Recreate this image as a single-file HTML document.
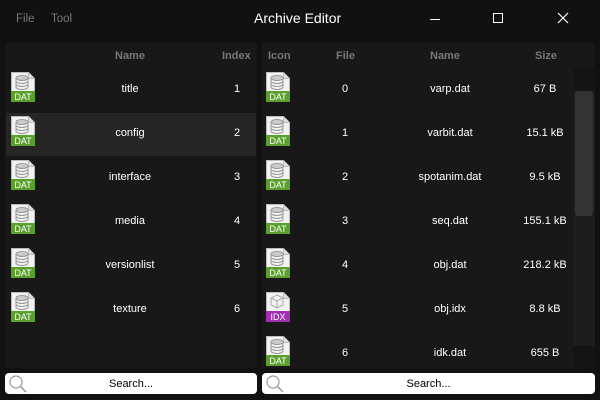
<!DOCTYPE html>
<html><head><style>
*{margin:0;padding:0;box-sizing:border-box}
body{width:600px;height:400px;background:#111;font-family:"Liberation Sans",sans-serif;color:#fff;position:relative;overflow:hidden;font-size:11px}
.a{position:absolute}
.menu{color:#777;font-size:11.5px;top:13px}
.panel{background:#181818}
.hdr{color:#777;font-weight:bold;font-size:11px;top:50px}
.c{position:absolute;text-align:center}
.search{background:#fff;border-radius:4px;height:21px;top:373px;color:#000;font-size:11px;text-align:center;line-height:22px}
</style></head><body>
<div class="a menu" style="left:16px">File</div>
<div class="a menu" style="left:51px">Tool</div>
<div class="a" style="left:254px;top:10px;font-size:14px;color:#fff">Archive Editor</div>
<div class="a" style="left:430px;top:19px;width:10px;height:1px;background:#fff"></div>
<div class="a" style="left:493px;top:13px;width:10px;height:10px;border:1px solid #fff"></div>
<svg class="a" style="left:557px;top:12px" width="12" height="12"><path d="M1 1L11 11M11 1L1 11" stroke="#fff" stroke-width="1.2"/></svg>

<svg width="0" height="0" style="position:absolute"><defs>
<g id="dat"><path d="M0.5 0.5H17.5L23.5 6.5V29.5H0.5Z" fill="#f2f2f2" stroke="#bbb"/><path d="M17.5 0.5V6.5H23.5" fill="#ddd" stroke="#bbb"/>
<ellipse cx="11" cy="6" rx="6" ry="2.5" fill="#ccc" stroke="#999"/><path d="M5 6V15A6 2.5 0 0 0 17 15V6M5 9A6 2.5 0 0 0 17 9M5 12A6 2.5 0 0 0 17 12" fill="none" stroke="#999"/>
<rect x="0" y="19" width="24" height="11" fill="#5aa02c"/><text x="12" y="28" font-size="9" font-family="Liberation Sans" fill="#fff" text-anchor="middle">DAT</text></g>
<g id="idx"><path d="M0.5 0.5H17.5L23.5 6.5V29.5H0.5Z" fill="#f2f2f2" stroke="#bbb"/><path d="M17.5 0.5V6.5H23.5" fill="#ddd" stroke="#bbb"/>
<path d="M11 3L17 6V13L11 16L5 13V6ZM5 6L11 9L17 6M11 9V16" fill="none" stroke="#aaa"/>
<rect x="0" y="19" width="24" height="11" fill="#a030b0"/><text x="12" y="28" font-size="9" font-family="Liberation Sans" fill="#fff" text-anchor="middle">IDX</text></g>
</defs></svg>

<div class="a panel" style="left:5px;top:43px;width:252px;height:325px"></div>
<div class="a hdr" style="left:115px">Name</div>
<div class="a hdr" style="left:222px">Index</div>
<div class="a" style="left:6px;top:113px;width:250px;height:43px;background:#262626"></div>

<div class="a panel" style="left:262px;top:43px;width:333px;height:325px"></div>
<div class="a" style="left:573px;top:67px;width:22px;height:279px;background:#1d1d1d"></div>
<div class="a" style="left:573px;top:67px;width:22px;height:24px;background:#141414"></div>
<div class="a" style="left:575px;top:91px;width:18px;height:125px;background:#333;border-radius:3px"></div>
<div class="a" style="left:573px;top:346px;width:22px;height:22px;background:#141414"></div>
<div class="a hdr" style="left:268px">Icon</div>
<div class="a hdr" style="left:336px">File</div>
<div class="a hdr" style="left:430px">Name</div>
<div class="a hdr" style="left:535px">Size</div>

<div id="L"></div>
<script>
var L=["title","config","interface","media","versionlist","texture"];
var R=[["varp.dat","67 B"],["varbit.dat","15.1 kB"],["spotanim.dat","9.5 kB"],["seq.dat","155.1 kB"],["obj.dat","218.2 kB"],["obj.idx","8.8 kB"],["idk.dat","655 B"]];
var h="";
L.forEach(function(n,i){var y=66+i*44;
h+='<svg class="a" style="left:11px;top:'+(y+6)+'px" width="24" height="30"><use href="#dat"/></svg>';
h+='<div class="c" style="left:80px;width:100px;top:'+(y+17)+'px">'+n+'</div>';
h+='<div class="c" style="left:227px;width:20px;top:'+(y+17)+'px">'+(i+1)+'</div>';});
R.forEach(function(r,i){var y=66+i*44;
h+='<svg class="a" style="left:266px;top:'+(y+6)+'px" width="24" height="30"><use href="#'+(i==5?'idx':'dat')+'"/></svg>';
h+='<div class="c" style="left:335px;width:20px;top:'+(y+17)+'px">'+i+'</div>';
h+='<div class="c" style="left:395px;width:110px;top:'+(y+17)+'px">'+r[0]+'</div>';
h+='<div class="c" style="left:515px;width:60px;top:'+(y+17)+'px">'+r[1]+'</div>';});
document.getElementById("L").innerHTML=h;
</script>

<div class="a search" style="left:5px;width:252px">Search...</div>
<div class="a search" style="left:262px;width:333px">Search...</div>
<svg class="a" style="left:8px;top:374px" width="20" height="20"><circle cx="8" cy="8" r="6" fill="none" stroke="#999" stroke-width="1.2"/><path d="M12.5 12.5L18 18" stroke="#999" stroke-width="1.5"/></svg>
<svg class="a" style="left:265px;top:374px" width="20" height="20"><circle cx="8" cy="8" r="6" fill="none" stroke="#999" stroke-width="1.2"/><path d="M12.5 12.5L18 18" stroke="#999" stroke-width="1.5"/></svg>
</body></html>
